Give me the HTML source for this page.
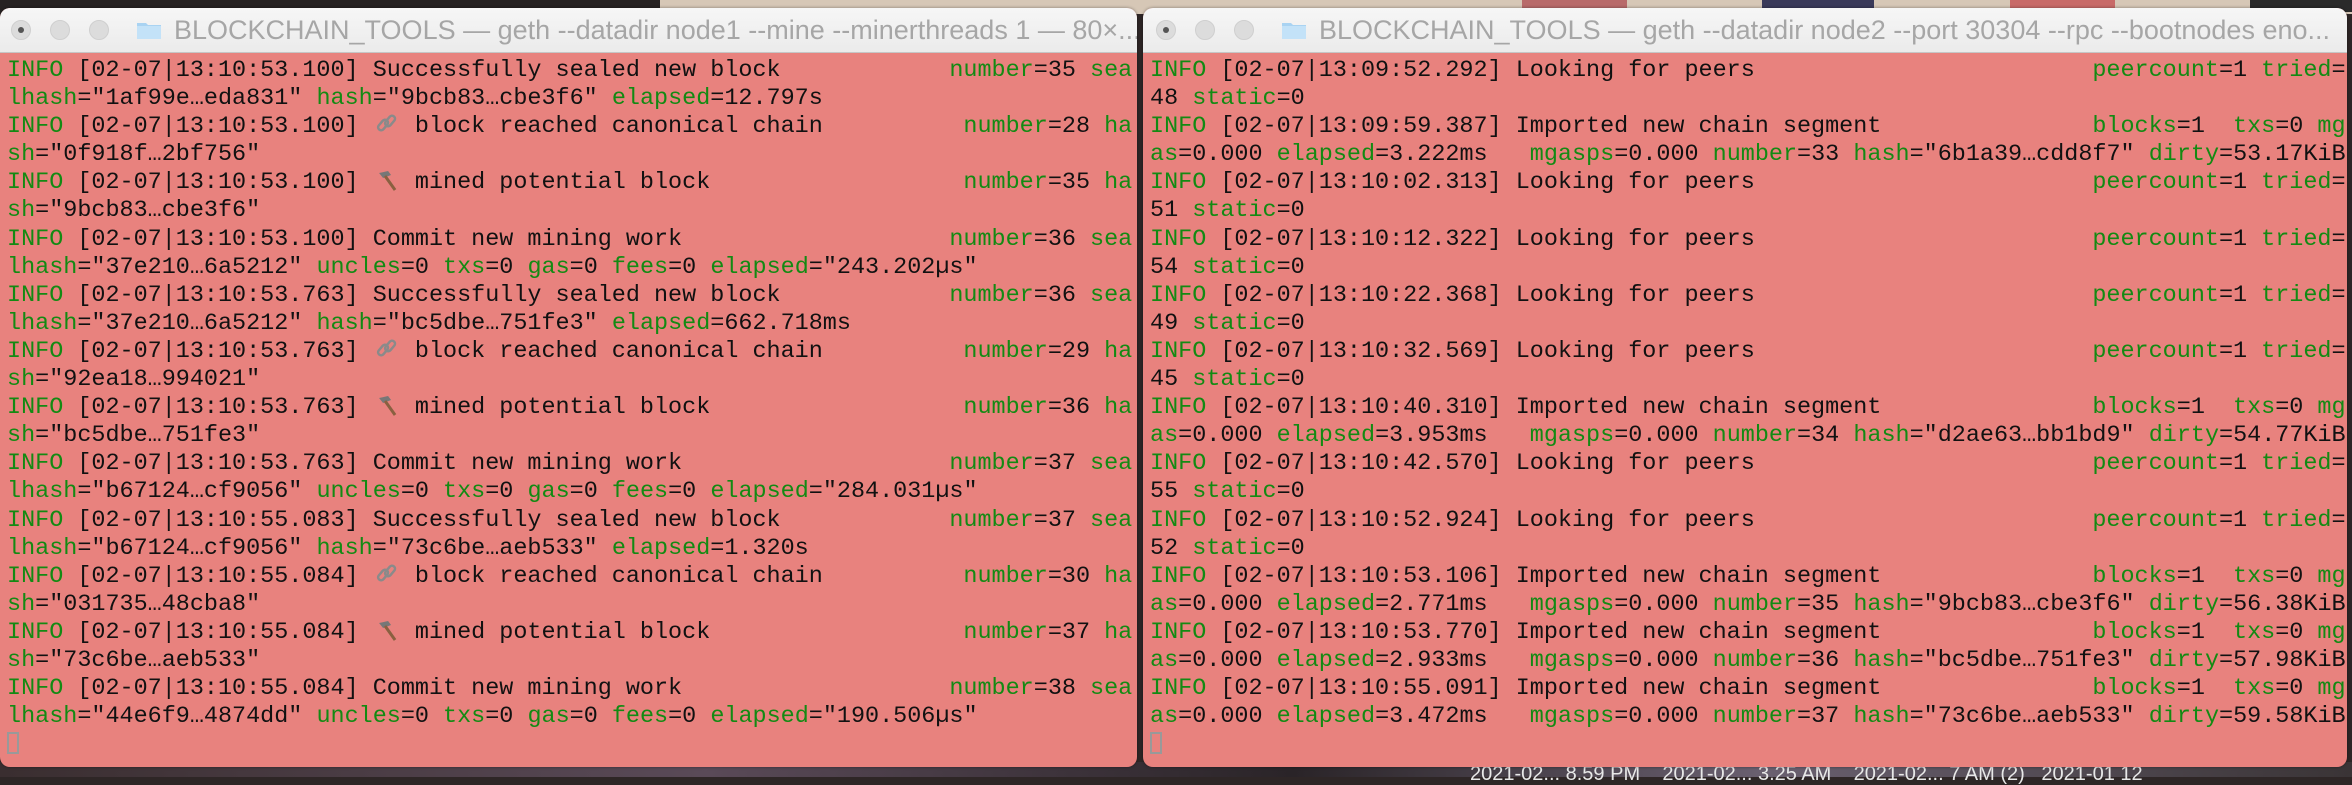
<!DOCTYPE html>
<html><head><meta charset="utf-8">
<style>
html,body{margin:0;padding:0}
body{width:2352px;height:777px;position:relative;overflow:hidden;background:#2e2626;font-family:"Liberation Sans",sans-serif}
.top{position:absolute;left:660px;top:0;width:1692px;height:14px;background:#d6c7b6}
.topdark{position:absolute;left:0;top:0;width:660px;height:14px;background:#262222}
.th{position:absolute;top:0;height:12px}
.bottom{position:absolute;left:0;top:762px;width:2352px;height:15px;background:linear-gradient(90deg,#3a2e30,#5a4a58 30%,#2a2428 55%,#6a6070 75%,#3a3436)}
.btxt{position:absolute;top:764px;left:1470px;color:#e8e8e8;font-size:20px;white-space:pre;line-height:20px}
.win{position:absolute;top:8px;background:#e8827e;border-radius:10px;overflow:hidden;box-shadow:0 0 3px rgba(0,0,0,.4)}
.tb{height:44px;background:linear-gradient(#f6f6f6,#ebebeb);border-bottom:1px solid #c6c6c6;position:relative}
.dot{position:absolute;top:12px;width:20px;height:20px;border-radius:50%;background:#dcdcdc;border:1px solid #cfcfcf;box-sizing:border-box}
.dot.f::after{content:"";position:absolute;left:6px;top:6px;width:6px;height:6px;border-radius:50%;background:#555}
.folder{position:absolute;top:12px;width:26px;height:20px}
.title{position:absolute;top:6px;font-size:27px;color:#a6a6a6;white-space:nowrap;line-height:32px}
pre{margin:0;padding:4px 0 0 7px;font-family:"Liberation Mono",monospace;font-size:23.45px;line-height:28.1px;color:#111}
.g{color:#138a13}
.e{display:inline-block;width:2ch;height:22px;vertical-align:-3px}
.cur{display:inline-block;width:12px;height:22px;border:2px solid #999;box-sizing:border-box;vertical-align:-4px}
</style></head><body>
<div class="topdark"></div><div class="top"></div>
<div class="th" style="left:1522px;width:105px;background:#b86a6a"></div>
<div class="th" style="left:1762px;width:112px;background:#3a3a5a"></div>
<div class="th" style="left:2010px;width:105px;background:#c86a68"></div>
<div class="th" style="left:2250px;width:102px;background:#2a2a2a"></div>
<div class="bottom"></div>
<div class="btxt">2021-02... 8.59 PM    2021-02... 3.25 AM    2021-02... 7 AM (2)   2021-01 12</div>

<svg width="0" height="0" style="position:absolute">
<defs>
<symbol id="chain" viewBox="0 0 28 22"><g fill="none" stroke="#8a8a8a" stroke-width="2.5"><rect x="4" y="9" width="12" height="6" rx="3" transform="rotate(-50 10 12)"/><rect x="11" y="5" width="12" height="6" rx="3" transform="rotate(-50 17 8)"/></g></symbol>
<symbol id="ham" viewBox="0 0 28 22"><path d="M6 4 L15 2 L18 6 L10 9 Z" fill="#777"/><path d="M12 7 L22 21" stroke="#8a6040" stroke-width="3"/></symbol>
</defs></svg>

<div class="win" style="left:0;width:1137px;height:759px">
<div class="tb">
<div class="dot f" style="left:11px"></div><div class="dot" style="left:50px"></div><div class="dot" style="left:89px"></div>
<svg class="folder" style="left:136px" viewBox="0 0 26 20"><path d="M1 3 h9 l2 2 h13 v14 h-24z" fill="#a9d3f2"/><path d="M1 6 h24 v13 h-24z" fill="#c3e2f8"/></svg>
<div class="title" style="left:174px">BLOCKCHAIN_TOOLS — geth --datadir node1 --mine --minerthreads 1 — 80×...</div>
</div>
<pre><span class="g">INFO</span> [02-07|13:10:53.100] Successfully sealed new block            <span class="g">number</span>=35 <span class="g">sea</span>
<span class="g">lhash</span>="1af99e…eda831" <span class="g">hash</span>="9bcb83…cbe3f6" <span class="g">elapsed</span>=12.797s
<span class="g">INFO</span> [02-07|13:10:53.100] <svg class="e"><use href="#chain"/></svg> block reached canonical chain          <span class="g">number</span>=28 <span class="g">ha</span>
<span class="g">sh</span>="0f918f…2bf756"
<span class="g">INFO</span> [02-07|13:10:53.100] <svg class="e"><use href="#ham"/></svg> mined potential block                  <span class="g">number</span>=35 <span class="g">ha</span>
<span class="g">sh</span>="9bcb83…cbe3f6"
<span class="g">INFO</span> [02-07|13:10:53.100] Commit new mining work                   <span class="g">number</span>=36 <span class="g">sea</span>
<span class="g">lhash</span>="37e210…6a5212" <span class="g">uncles</span>=0 <span class="g">txs</span>=0 <span class="g">gas</span>=0 <span class="g">fees</span>=0 <span class="g">elapsed</span>="243.202µs"
<span class="g">INFO</span> [02-07|13:10:53.763] Successfully sealed new block            <span class="g">number</span>=36 <span class="g">sea</span>
<span class="g">lhash</span>="37e210…6a5212" <span class="g">hash</span>="bc5dbe…751fe3" <span class="g">elapsed</span>=662.718ms
<span class="g">INFO</span> [02-07|13:10:53.763] <svg class="e"><use href="#chain"/></svg> block reached canonical chain          <span class="g">number</span>=29 <span class="g">ha</span>
<span class="g">sh</span>="92ea18…994021"
<span class="g">INFO</span> [02-07|13:10:53.763] <svg class="e"><use href="#ham"/></svg> mined potential block                  <span class="g">number</span>=36 <span class="g">ha</span>
<span class="g">sh</span>="bc5dbe…751fe3"
<span class="g">INFO</span> [02-07|13:10:53.763] Commit new mining work                   <span class="g">number</span>=37 <span class="g">sea</span>
<span class="g">lhash</span>="b67124…cf9056" <span class="g">uncles</span>=0 <span class="g">txs</span>=0 <span class="g">gas</span>=0 <span class="g">fees</span>=0 <span class="g">elapsed</span>="284.031µs"
<span class="g">INFO</span> [02-07|13:10:55.083] Successfully sealed new block            <span class="g">number</span>=37 <span class="g">sea</span>
<span class="g">lhash</span>="b67124…cf9056" <span class="g">hash</span>="73c6be…aeb533" <span class="g">elapsed</span>=1.320s
<span class="g">INFO</span> [02-07|13:10:55.084] <svg class="e"><use href="#chain"/></svg> block reached canonical chain          <span class="g">number</span>=30 <span class="g">ha</span>
<span class="g">sh</span>="031735…48cba8"
<span class="g">INFO</span> [02-07|13:10:55.084] <svg class="e"><use href="#ham"/></svg> mined potential block                  <span class="g">number</span>=37 <span class="g">ha</span>
<span class="g">sh</span>="73c6be…aeb533"
<span class="g">INFO</span> [02-07|13:10:55.084] Commit new mining work                   <span class="g">number</span>=38 <span class="g">sea</span>
<span class="g">lhash</span>="44e6f9…4874dd" <span class="g">uncles</span>=0 <span class="g">txs</span>=0 <span class="g">gas</span>=0 <span class="g">fees</span>=0 <span class="g">elapsed</span>="190.506µs"
<span class="cur"></span></pre>
</div>

<div class="win" style="left:1143px;width:1204px;height:759px">
<div class="tb">
<div class="dot f" style="left:13px"></div><div class="dot" style="left:52px"></div><div class="dot" style="left:91px"></div>
<svg class="folder" style="left:138px" viewBox="0 0 26 20"><path d="M1 3 h9 l2 2 h13 v14 h-24z" fill="#a9d3f2"/><path d="M1 6 h24 v13 h-24z" fill="#c3e2f8"/></svg>
<div class="title" style="left:176px">BLOCKCHAIN_TOOLS — geth --datadir node2 --port 30304 --rpc --bootnodes eno...</div>
</div>
<pre><span class="g">INFO</span> [02-07|13:09:52.292] Looking for peers                        <span class="g">peercount</span>=1 <span class="g">tried</span>=
48 <span class="g">static</span>=0
<span class="g">INFO</span> [02-07|13:09:59.387] Imported new chain segment               <span class="g">blocks</span>=1  <span class="g">txs</span>=0 <span class="g">mg</span>
<span class="g">as</span>=0.000 <span class="g">elapsed</span>=3.222ms   <span class="g">mgasps</span>=0.000 <span class="g">number</span>=33 <span class="g">hash</span>="6b1a39…cdd8f7" <span class="g">dirty</span>=53.17KiB
<span class="g">INFO</span> [02-07|13:10:02.313] Looking for peers                        <span class="g">peercount</span>=1 <span class="g">tried</span>=
51 <span class="g">static</span>=0
<span class="g">INFO</span> [02-07|13:10:12.322] Looking for peers                        <span class="g">peercount</span>=1 <span class="g">tried</span>=
54 <span class="g">static</span>=0
<span class="g">INFO</span> [02-07|13:10:22.368] Looking for peers                        <span class="g">peercount</span>=1 <span class="g">tried</span>=
49 <span class="g">static</span>=0
<span class="g">INFO</span> [02-07|13:10:32.569] Looking for peers                        <span class="g">peercount</span>=1 <span class="g">tried</span>=
45 <span class="g">static</span>=0
<span class="g">INFO</span> [02-07|13:10:40.310] Imported new chain segment               <span class="g">blocks</span>=1  <span class="g">txs</span>=0 <span class="g">mg</span>
<span class="g">as</span>=0.000 <span class="g">elapsed</span>=3.953ms   <span class="g">mgasps</span>=0.000 <span class="g">number</span>=34 <span class="g">hash</span>="d2ae63…bb1bd9" <span class="g">dirty</span>=54.77KiB
<span class="g">INFO</span> [02-07|13:10:42.570] Looking for peers                        <span class="g">peercount</span>=1 <span class="g">tried</span>=
55 <span class="g">static</span>=0
<span class="g">INFO</span> [02-07|13:10:52.924] Looking for peers                        <span class="g">peercount</span>=1 <span class="g">tried</span>=
52 <span class="g">static</span>=0
<span class="g">INFO</span> [02-07|13:10:53.106] Imported new chain segment               <span class="g">blocks</span>=1  <span class="g">txs</span>=0 <span class="g">mg</span>
<span class="g">as</span>=0.000 <span class="g">elapsed</span>=2.771ms   <span class="g">mgasps</span>=0.000 <span class="g">number</span>=35 <span class="g">hash</span>="9bcb83…cbe3f6" <span class="g">dirty</span>=56.38KiB
<span class="g">INFO</span> [02-07|13:10:53.770] Imported new chain segment               <span class="g">blocks</span>=1  <span class="g">txs</span>=0 <span class="g">mg</span>
<span class="g">as</span>=0.000 <span class="g">elapsed</span>=2.933ms   <span class="g">mgasps</span>=0.000 <span class="g">number</span>=36 <span class="g">hash</span>="bc5dbe…751fe3" <span class="g">dirty</span>=57.98KiB
<span class="g">INFO</span> [02-07|13:10:55.091] Imported new chain segment               <span class="g">blocks</span>=1  <span class="g">txs</span>=0 <span class="g">mg</span>
<span class="g">as</span>=0.000 <span class="g">elapsed</span>=3.472ms   <span class="g">mgasps</span>=0.000 <span class="g">number</span>=37 <span class="g">hash</span>="73c6be…aeb533" <span class="g">dirty</span>=59.58KiB
<span class="cur"></span></pre>
</div>
</body></html>
